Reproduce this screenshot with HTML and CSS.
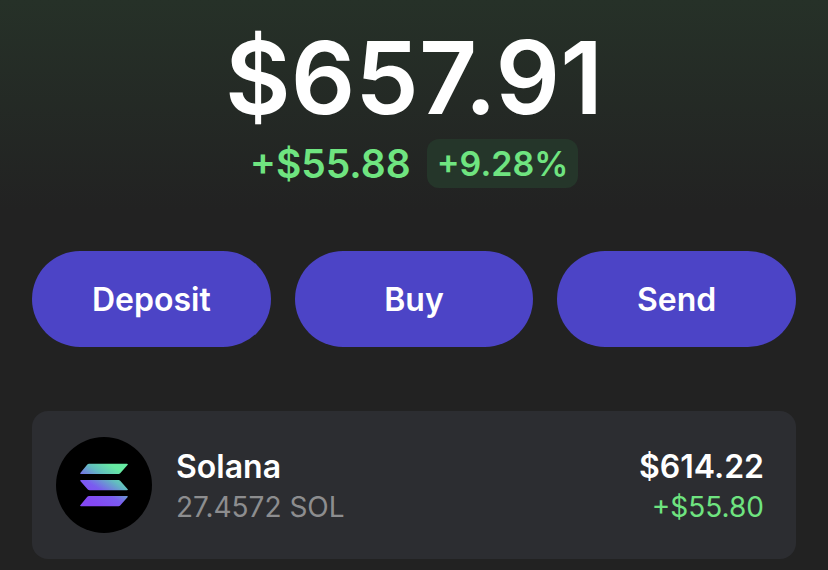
FILE: index.html
```html
<!DOCTYPE html>
<html lang="en">
<head>
    <meta charset="UTF-8">
    <meta name="viewport" content="width=device-width, initial-scale=1.0">
    <title>Wallet</title>
    <link rel="stylesheet" href="styles.css">
</head>
<body>
    <main class="wallet">
        <header class="balance">
            <h1 class="total">$657.91</h1>
            <div class="change">
                <span class="change-amount">+$55.88</span>
                <span class="change-percent">+9.28%</span>
            </div>
        </header>

        <div class="actions">
            <button type="button" class="btn">Deposit</button>
            <button type="button" class="btn">Buy</button>
            <button type="button" class="btn">Send</button>
        </div>

        <section class="token-card">
            <div class="token-icon">
                <svg viewBox="0 0 48 44" width="48" height="44" aria-hidden="true">
                    <defs>
                        <linearGradient id="sol" gradientUnits="userSpaceOnUse" x1="14" y1="40" x2="36" y2="5">
                            <stop offset="0" stop-color="#8448f4"/>
                            <stop offset="0.35" stop-color="#7a5cf0"/>
                            <stop offset="0.7" stop-color="#62bcc0"/>
                            <stop offset="1" stop-color="#66eba2"/>
                        </linearGradient>
                    </defs>
                    <g fill="url(#sol)">
                        <path d="M9 .7h38q1.300 0 .7 1l-7.500 8.500q-.7 .8-1.700 .8H1q-1.300 0-.7-1l7-8.500q.7-.8 1.700-.8z"/>
                        <path d="M1 17h37.500q1 0 1.700.8l7.500 8.500q.6 1-.7 1H9.500q-1 0-1.700-.8L.3 18q-.6-1 .7-1z"/>
                        <path d="M9 33h38q1.300 0 .7 1l-7.500 8.500q-.7 .8-1.700 .8H1q-1.300 0-.7-1l7-8.500q.7-.8 1.700-.8z"/>
                    </g>
                </svg>
            </div>
            <div class="token-info">
                <h2 class="token-name">Solana</h2>
                <p class="token-amount">27.4572 SOL</p>
            </div>
            <div class="token-value">
                <p class="token-price">$614.22</p>
                <p class="token-gain">+$55.80</p>
            </div>
        </section>
    </main>
</body>
</html>
```
FILE: styles.css
```css
:root {
    --primary-color: #4c44c6;
    --background-color: #222222;
    --card-background: #2c2d31;
    --text-color: #ffffff;
    --muted-color: #8d8d8f;
    --gain-color: #6fe480;
}
* {
    box-sizing: border-box;
}
body {
    margin: 0;
    min-height: 100vh;
    font-family: Inter, sans-serif;
    background: linear-gradient(#263128, var(--background-color) 210px) var(--background-color);
    color: var(--text-color);
}
h1, h2, p {
    margin: 0;
}
.wallet {
    padding: 16px 32px 11px;
}
.balance {
    text-align: center;
}
.total {
    font-size: 101px;
    font-weight: 600;
    line-height: 123px;
}
.change {
    display: flex;
    justify-content: center;
    align-items: center;
    gap: 16px;
    color: var(--gain-color);
}
.change-amount {
    font-size: 39px;
    font-weight: 600;
    line-height: 48px;
}
.change-percent {
    padding: 0 10px;
    border-radius: 12px;
    background-color: #25362a;
    font-size: 34px;
    font-weight: 600;
    line-height: 49px;
}
.actions {
    display: grid;
    grid-template-columns: repeat(3, 1fr);
    gap: 24px;
    margin: 63px 0 64px;
}
.btn {
    height: 96px;
    padding: 0 24px;
    border: none;
    border-radius: 48px;
    background-color: var(--primary-color);
    color: var(--text-color);
    font-family: inherit;
    font-size: 32px;
    font-weight: 600;
    cursor: pointer;
}
.token-card {
    display: flex;
    align-items: center;
    gap: 24px;
    padding: 26px 32px 26px 24px;
    border-radius: 16px;
    background-color: var(--card-background);
}
.token-icon {
    display: flex;
    justify-content: center;
    align-items: center;
    width: 96px;
    height: 96px;
    border-radius: 50%;
    background-color: #000000;
}
.token-info, .token-value {
    padding-top: 4px;
}
.token-value {
    margin-left: auto;
    text-align: right;
}
.token-name, .token-price {
    font-size: 32px;
    font-weight: 600;
    line-height: 40px;
}
.token-amount, .token-gain {
    font-size: 28px;
    line-height: 40px;
}
.token-amount {
    color: var(--muted-color);
}
.token-gain {
    color: var(--gain-color);
}
```
